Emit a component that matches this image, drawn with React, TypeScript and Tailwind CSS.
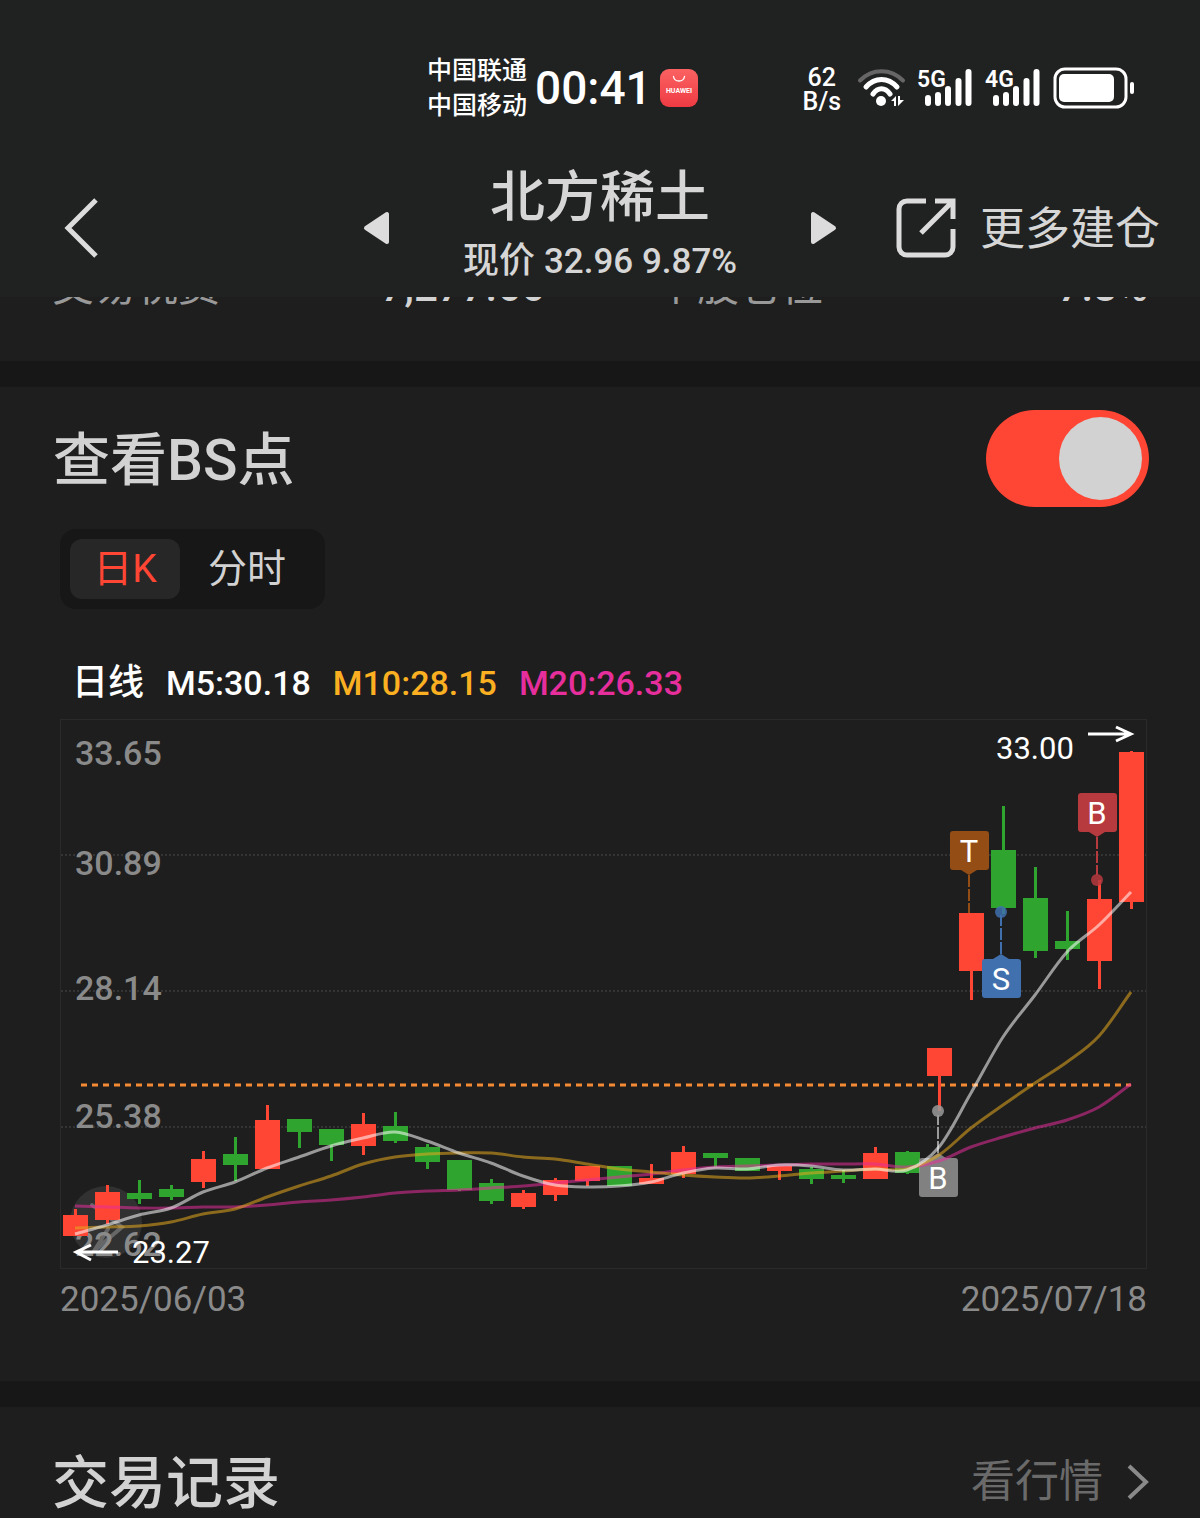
import { useState } from "react";

interface Candle {
    open: number;
    close: number;
    high: number;
    low: number;
    up: boolean;
}

interface MarkerProps {
    x: number;
    y: number;
    label: string;
    color: string;
    dotY?: number;
    lineTo: number;
    opacity?: number;
    below?: boolean;
}

const RED = "#ff4534"
const GREEN = "#2fa52f"
const STEP = 32
const START = 15

// [body top, body bottom, wick top, wick bottom, rising]
const rows: [number, number, number, number, number][] = [
    [496, 517, 490, 517, 1], [473, 501, 466, 505, 1], [474, 480, 461, 485, 0], [470, 478, 466, 481, 0],
    [440, 463, 432, 469, 1], [435, 446, 418, 462, 0], [401, 450, 386, 450, 1], [400, 413, 400, 429, 0],
    [410, 426, 410, 442, 0], [405, 427, 394, 436, 1], [407, 422, 393, 424, 0], [428, 443, 425, 450, 0],
    [441, 471, 441, 472, 0], [464, 482, 460, 485, 0], [474, 488, 471, 490, 1], [461, 476, 459, 482, 1],
    [447, 462, 447, 467, 1], [447, 467, 447, 467, 0], [459, 465, 445, 465, 1], [433, 455, 427, 459, 1],
    [434, 439, 434, 448, 0], [439, 452, 439, 452, 0], [447, 452, 447, 461, 1], [450, 460, 448, 465, 0],
    [456, 460, 451, 464, 0], [434, 460, 428, 460, 1], [433, 454, 432, 455, 0], [329, 357, 329, 392, 1],
    [194, 252, 194, 281, 1], [131, 189, 87, 195, 0], [179, 232, 148, 239, 0], [222, 230, 192, 241, 0],
    [180, 242, 161, 270, 1], [33, 183, 32, 190, 1],
]

const candles: Candle[] = rows.map(([open, close, high, low, up]) => ({ open, close, high, low, up: up === 1 }))

const m5 = [515, 506, 496, 489, 473, 463, 449, 438, 427, 419, 413, 422, 434, 444, 457, 466, 468, 467, 463, 454, 449, 450, 446, 447, 451, 450, 451, 428, 374, 318, 276, 233, 206, 173]
const m10 = [509, 508, 507, 503, 495, 490, 478, 467, 457, 445, 438, 435, 434, 434, 438, 440, 445, 450, 453, 456, 458, 459, 457, 454, 452, 450, 450, 436, 409, 386, 364, 343, 317, 273]
const m20 = [487, 488, 489, 489, 488, 488, 486, 483, 481, 478, 474, 472, 471, 469, 467, 464, 461, 458, 455, 451, 448, 447, 446, 445, 445, 445, 448, 442, 428, 418, 409, 401, 388, 365]

const axis = [
    { label: "33.65", y: 46 },
    { label: "30.89", y: 156 },
    { label: "28.14", y: 281 },
    { label: "25.38", y: 409 },
    { label: "22.62", y: 537 },
]

const smoothPath = (values: number[]) => {
    const last = values.length - 1
    const at = (i: number) => {
        if (i < 0) return 2 * values[0] - values[1]
        if (i > last) return 2 * values[last] - values[last - 1]
        return values[i]
    }
    let d = `M${START} ${values[0]}`
    for (let i = 0; i < last; i++) {
        const x = START + i * STEP
        const c1 = at(i) + (at(i + 1) - at(i - 1)) / 6
        const c2 = at(i + 1) - (at(i + 2) - at(i)) / 6
        d += ` C${x + STEP / 3} ${c1} ${x + (STEP * 2) / 3} ${c2} ${x + STEP} ${at(i + 1)}`
    }
    return d
}

const Marker = ({ x, y, label, color, dotY, lineTo, opacity = 1, below = false }: MarkerProps) => {
    const edge = below ? y : y + 39
    const tip = below ? y - 5 : y + 44
    return (
        <g>
            <line x1={x} x2={x} y1={tip} y2={lineTo} stroke={color} strokeWidth={2} strokeDasharray="12 2" />
            {dotY && <circle cx={x} cy={dotY} r={6} fill={color} fillOpacity={0.85} />}
            <g opacity={opacity}>
                <path d={`M${x - 8} ${edge}L${x} ${tip}L${x + 8} ${edge}Z`} fill={color} />
                <rect x={x - 19} y={y} width={39} height={39} rx={3} fill={color} />
            </g>
            <text x={x} y={y + 31} textAnchor="middle" fontSize={31} fill="#fff">{label}</text>
        </g>
    )
}

const Chart = ({ showMarkers }: { showMarkers: boolean }) => (
    <svg viewBox="0 0 1087 550" className="block w-full font-[Roboto,'Noto_Sans_CJK_SC',sans-serif]" role="img" aria-label="日线">
        <rect x={0.5} y={0.5} width={1086} height={549} fill="none" stroke="#2a2a2a" />
        {[136, 272, 408].map(y => (
            <line key={y} x1={1} x2={1086} y1={y} y2={y} stroke="#343434" strokeWidth={2} strokeDasharray="2 2" />
        ))}

        <circle cx={46} cy={503} r={36} fill="#313131" />
        <path d="M32 486l30 22-28 24M48 510l-14 22" fill="none" stroke="#666" strokeWidth={4} strokeLinecap="round" />

        {axis.map(({ label, y }) => (
            <text key={label} x={15} y={y} fontSize={34} fontWeight={500} fill="#8a8a8a">{label}</text>
        ))}

        <line x1={21} x2={1071} y1={366} y2={366} stroke="#f58a34" strokeWidth={3} strokeDasharray="6 5" />

        {candles.map((c, i) => {
            const x = START + i * STEP
            const fill = c.up ? RED : GREEN
            return (
                <g key={i} fill={fill}>
                    <rect x={x - 1} y={c.high} width={3} height={c.low - c.high} />
                    <rect x={x - 12} y={c.open} width={25} height={c.close - c.open} />
                </g>
            )
        })}

        {showMarkers && <>
            <Marker x={909} y={112} label="T" color="#944d15" lineTo={194} />
            <Marker x={941} y={240} label="S" color="#4070ae" dotY={193} lineTo={196} below />
            <Marker x={1037} y={74} label="B" color="#b73a3e" dotY={161} lineTo={156} />
            <Marker x={878} y={439} label="B" color="#9a9a9a" dotY={392} lineTo={396} opacity={0.8} below />
        </>}

        <g fill="none" strokeWidth={3}>
            <path d={smoothPath(m20)} stroke="#e62e9c" strokeOpacity={0.55} />
            <path d={smoothPath(m10)} stroke="#e6aa1e" strokeOpacity={0.55} />
            <path d={smoothPath(m5)} stroke="#fff" strokeOpacity={0.55} />
        </g>

        <g fill="none" stroke="#fff" strokeWidth={3}>
            <path d="M1028 15h42M1056 8l15 7-15 7" />
            <path d="M58 533H17M31 526l-15 7 15 8" />
        </g>
        <text x={936} y={40} fontSize={31} fill="#fff">33.00</text>
        <text x={72} y={544} fontSize={31} fill="#fff">23.27</text>
    </svg>
)

const Signal = ({ label }: { label: string }) => (
    <svg viewBox="0 0 56 40" className="h-10 w-14 overflow-visible" role="img" aria-label={label}>
        <text x={0} y={19} fontSize={23} fontWeight={600} fill="#fff">{label}</text>
        <g stroke="#fff" strokeWidth={6} strokeLinecap="round">
            <path d="M11 30v5M21 27v8M31 21v14M41.500 13v22M51.500 4v31" />
        </g>
    </svg>
)

const StatusBar = () => (
    <div className="flex h-[150px] items-center justify-between pt-[26px] pr-[65px] pl-[427px] text-white">
        <div className="flex items-center">
            <div className="mr-2 text-[25px] leading-[35px] font-medium">
                <p>中国联通</p>
                <p>中国移动</p>
            </div>
            <time className="text-[46px] leading-[50px] font-medium">00:41</time>
            <svg viewBox="0 0 38 38" className="ml-2 size-[38px]" role="img" aria-label="HUAWEI">
                <defs>
                    <linearGradient id="app" x1="0" y1="0" x2="0" y2="1">
                        <stop offset="0" stopColor="#fb6262" />
                        <stop offset="1" stopColor="#ee3b43" />
                    </linearGradient>
                </defs>
                <rect width={38} height={38} rx={9} fill="url(#app)" />
                <path d="M13.500 7.500c1 6 10 6 11 0" fill="none" stroke="#fff" strokeWidth={1.3} strokeLinecap="round" />
                <text x={19} y={24} textAnchor="middle" fontSize={7} fontWeight={700} fill="#fff">HUAWEI</text>
            </svg>
        </div>
        <div className="flex items-center">
            <div className="mr-4 pt-1 text-center text-[25px] leading-6 font-medium">
                <p>62</p>
                <p>B/s</p>
            </div>
            <svg viewBox="0 0 50 40" className="mr-[10px] h-10 w-[50px]" role="img" aria-label="Wi-Fi">
                <g fill="none" stroke="#fff" strokeLinecap="round">
                    <path d="M3 12.500C15 0 34 0 46 12.500" stroke="#666" strokeWidth={4} />
                    <path d="M9 19C18 9 31 9 40 19" strokeWidth={5} />
                    <path d="M16 26C21 19 28 19 33 26" strokeWidth={5} />
                </g>
                <circle cx={24} cy={33} r={5} fill="#fff" />
                <path d="M34 33l5-5v10h-2v-5zM41 28v10l6-6h-4v-4z" fill="#fff" />
            </svg>
            <Signal label="5G" />
            <span className="w-3" />
            <Signal label="4G" />
            <svg viewBox="0 0 82 42" className="ml-3 h-[42px] w-[82px]" role="img" aria-label="电量">
                <rect x={2} y={2} width={71} height={38} rx={10} fill="none" stroke="#fff" strokeWidth={3} />
                <rect x={6} y={7} width={55} height={28} rx={5} fill="#fff" />
                <rect x={77} y={15} width={4} height={12} rx={2} fill="#fff" />
            </svg>
        </div>
    </div>
)

const NavBar = () => (
    <nav className="grid grid-cols-[1fr_474px_1fr] items-center text-[#d6d6d6]">
        <button type="button" aria-label="返回" className="justify-self-start pl-16">
            <svg viewBox="0 0 36 60" className="h-[60px] w-9">
                <path d="M32 2L4 30l28 28" fill="none" stroke="#dcdcdc" strokeWidth={5} />
            </svg>
        </button>
        <div className="flex items-center justify-between">
            <button type="button" aria-label="上一只">
                <svg viewBox="0 0 28 34" className="h-[34px] w-7">
                    <path d="M24 3v28L3 17z" fill="#dcdcdc" stroke="#dcdcdc" strokeWidth={4} strokeLinejoin="round" />
                </svg>
            </button>
            <div className="text-center">
                <h1 className="text-[55px] leading-[68px] font-medium">北方稀土</h1>
                <p className="text-[36px] leading-[60px] font-medium">现价 <span className="text-[35px]">32.96 9.87%</span></p>
            </div>
            <button type="button" aria-label="下一只">
                <svg viewBox="0 0 28 34" className="h-[34px] w-7">
                    <path d="M4 3v28l21-14z" fill="#dcdcdc" stroke="#dcdcdc" strokeWidth={4} strokeLinejoin="round" />
                </svg>
            </button>
        </div>
        <button type="button" className="flex items-center gap-6 justify-self-end pr-10 text-[45px] leading-[60px] whitespace-nowrap">
            <svg viewBox="0 0 60 60" className="size-[60px]">
                <g fill="none" stroke="#dcdcdc" strokeWidth={5}>
                    <path d="M30 3H11a8 8 0 0 0-8 8v38a8 8 0 0 0 8 8h38a8 8 0 0 0 8-8V31" />
                    <path d="M39 3h18v18M56 4L25 35" />
                </g>
            </svg>
            <span className="pt-1">更多建仓</span>
        </button>
    </nav>
)

export default function App() {
    const [showBS, setShowBS] = useState<boolean>(true)
    const [period, setPeriod] = useState<string>("日K")

    return (
        <div className="min-h-screen overflow-hidden bg-[#1e1e1e] font-[Roboto,'Noto_Sans_CJK_SC',sans-serif] text-[#d2d2d2]" lang="zh-CN">
            <header className="h-[297px] bg-[#202221]">
                <StatusBar />
                <div className="pt-[13px]">
                    <NavBar />
                </div>
            </header>

            <section className="flex h-16 items-start overflow-hidden px-[52px] text-[42px] leading-[60px]">
                <dl className="-mt-10 grid w-full grid-cols-2 gap-x-[110px]">
                    <div className="flex justify-between">
                        <dt className="text-[#999]">交易税费</dt>
                        <dd className="font-medium">7,277.66</dd>
                    </div>
                    <div className="flex justify-between">
                        <dt className="text-[#999]">个股仓位</dt>
                        <dd className="font-medium">7.8%</dd>
                    </div>
                </dl>
            </section>
            <div className="h-[26px] bg-[#171717]" />

            <section className="pb-[52px]">
                <div className="flex items-center justify-between pt-[21px] pr-[51px] pl-[53px]">
                    <label htmlFor="bs-points" className="pt-1 text-[57px] leading-[97px] font-medium">查看BS点</label>
                    <input
                        type="checkbox"
                        role="switch"
                        id="bs-points"
                        className="h-[97px] w-[163px] appearance-none rounded-full bg-[#555] p-[7px] before:block before:size-[83px] before:rounded-full before:bg-[#d2d2d2] checked:bg-[#ff4534] checked:before:ml-[66px]"
                        checked={showBS}
                        onChange={() => setShowBS(!showBS)}
                    />
                </div>

                <div className="pr-[53px] pl-[60px]">
                    <div className="mt-5 inline-flex h-20 w-[265px] rounded-2xl bg-[#171717] p-[10px] text-[39px] leading-[60px]">
                        {["日K", "分时"].map(item => (
                            <button
                                key={item}
                                type="button"
                                className={period === item ? "h-[60px] w-[110px] rounded-xl bg-[#272727] text-[#ff4534]" : "ml-3 h-[60px] w-[110px] rounded-xl"}
                                onClick={() => setPeriod(item)}
                            >
                                {item}
                            </button>
                        ))}
                    </div>

                    <div className="mt-[46px] flex h-[56px] items-center gap-[22px] pl-3 text-[34px] font-medium text-white">
                        <span className="text-[36px]">日线</span>
                        <span>M5:30.18</span>
                        <span className="text-[#fbb022]">M10:28.15</span>
                        <span className="text-[#e62e9c]">M20:26.33</span>
                    </div>

                    <div className="mt-2">
                        <Chart showMarkers={showBS} />
                    </div>
                    <div className="flex justify-between pt-1 text-[35px] leading-[54px] text-[#8a8a8a]">
                        <time>2025/06/03</time>
                        <time>2025/07/18</time>
                    </div>
                </div>
                <div className="h-[2px]" />
            </section>
            <div className="h-[26px] bg-[#171717]" />

            <section className="flex h-[111px] items-center justify-between overflow-hidden pt-[38px] pr-[51px] pl-[52px]">
                <h2 className="pt-1 text-[57px] leading-[69px] font-medium">交易记录</h2>
                <a href="#quotes" className="flex items-center gap-6 text-[44px] leading-[60px] text-[#6a6a6a]">
                    看行情
                    <svg viewBox="0 0 22 36" className="h-9 w-[22px]">
                        <path d="M2 2l17 16L2 34" fill="none" stroke="#8a8a8a" strokeWidth={4} />
                    </svg>
                </a>
            </section>
        </div>
    )
}
